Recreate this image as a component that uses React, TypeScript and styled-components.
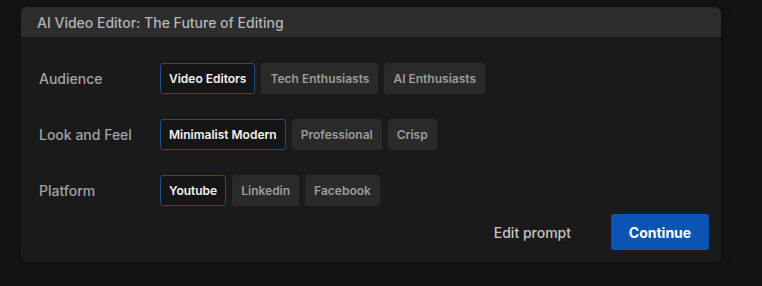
import React, { useState } from "react";
import styled, { createGlobalStyle } from "styled-components";

const GlobalStyle = createGlobalStyle`
  html, body {
    margin: 0;
    padding: 0;
    background: #141414;
    font-family: Inter, "Noto Sans", sans-serif;
  }
`;

const Page = styled.div`
  width: 762px;
  height: 286px;
  padding: 7px 0 0 21px;
  box-sizing: border-box;
`;

const Card = styled.div`
  width: 700px;
  border-radius: 6px;
  background: #1a1a1a;
  box-shadow: 0 0 8px rgba(0, 0, 0, 0.35);
  overflow: hidden;
`;

const Header = styled.div`
  height: 30px;
  background: #2d2d2d;
  display: flex;
  align-items: center;
  padding-left: 16px;
  font-size: 14px;
  font-weight: 500;
  color: #b4b4b4;
`;

const Body = styled.div`
  padding: 26px 12px 12px 18px;
  display: flex;
  flex-direction: column;
`;

const Rows = styled.div`
  display: flex;
  flex-direction: column;
  gap: 25px;
`;

const Row = styled.div`
  display: flex;
  align-items: center;
`;

const Label = styled.div`
  width: 121px;
  font-size: 14px;
  font-weight: 500;
  color: #a3a3a3;
`;

const Chips = styled.div`
  display: flex;
  gap: 6px;
`;

const Chip = styled.button<{ $active: boolean }>`
  height: 31px;
  box-sizing: border-box;
  padding: 0 8px;
  border-radius: 3px;
  font-family: Inter, "Noto Sans", sans-serif;
  font-size: 12px;
  font-weight: 600;
  cursor: pointer;
  border: 1px solid ${(p) => (p.$active ? "#1d4f8a" : "#2a2a2a")};
  background: ${(p) => (p.$active ? "#151515" : "#2a2a2a")};
  color: ${(p) => (p.$active ? "#f2f2f2" : "#9c9c9c")};
`;

const Actions = styled.div`
  display: flex;
  justify-content: flex-end;
  align-items: center;
  gap: 40px;
  margin-top: 8px;
`;

const EditButton = styled.button`
  background: none;
  border: none;
  padding: 0;
  font-family: Inter, "Noto Sans", sans-serif;
  font-size: 14px;
  font-weight: 500;
  color: #c4c4c4;
  cursor: pointer;
`;

const ContinueButton = styled.button`
  width: 98px;
  height: 36px;
  border: none;
  border-radius: 3px;
  background: #0b54b3;
  color: #ffffff;
  font-family: Inter, "Noto Sans", sans-serif;
  font-size: 14px;
  font-weight: 700;
  cursor: pointer;
`;

const groups = [
  { label: "Audience", options: ["Video Editors", "Tech Enthusiasts", "AI Enthusiasts"] },
  { label: "Look and Feel", options: ["Minimalist Modern", "Professional", "Crisp"] },
  { label: "Platform", options: ["Youtube", "Linkedin", "Facebook"] },
];

export default function App() {
  const [selected, setSelected] = useState<Record<string, string>>({
    Audience: "Video Editors",
    "Look and Feel": "Minimalist Modern",
    Platform: "Youtube",
  });

  return (
    <Page>
      <GlobalStyle />
      <Card>
        <Header>AI Video Editor: The Future of Editing</Header>
        <Body>
          <Rows>
            {groups.map((g) => (
              <Row key={g.label}>
                <Label>{g.label}</Label>
                <Chips>
                  {g.options.map((o) => (
                    <Chip
                      key={o}
                      $active={selected[g.label] === o}
                      onClick={() => setSelected({ ...selected, [g.label]: o })}
                    >
                      {o}
                    </Chip>
                  ))}
                </Chips>
              </Row>
            ))}
          </Rows>
          <Actions>
            <EditButton>Edit prompt</EditButton>
            <ContinueButton>Continue</ContinueButton>
          </Actions>
        </Body>
      </Card>
    </Page>
  );
}
